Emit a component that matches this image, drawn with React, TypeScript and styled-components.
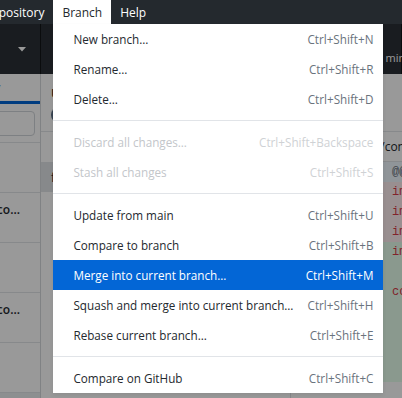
import React from "react";
import styled, { createGlobalStyle } from "styled-components";

const GlobalStyle = createGlobalStyle`
  html, body { margin: 0; padding: 0; }
  body {
    width: 402px;
    height: 398px;
    overflow: hidden;
    background: #ffffff;
    font-family: "Open Sans", "Noto Sans", sans-serif;
  }
  * { box-sizing: border-box; }
`;

const Window = styled.div`
  position: relative;
  width: 402px;
  height: 398px;
  overflow: hidden;
  display: flex;
  flex-direction: column;
  background: #ffffff;
  color: #24292e;
  font-size: 12px;
`;

/* ---------- menu bar ---------- */

const MenuBar = styled.nav`
  position: relative;
  z-index: 3;
  flex: none;
  height: 24px;
  display: flex;
  align-items: stretch;
  background: #24292e;
  margin-left: -145px;
`;

const MenuBarItem = styled.div<{ $open?: boolean }>`
  position: relative;
  display: flex;
  align-items: center;
  padding: 0 9px;
  font-size: 12px;
  white-space: nowrap;
  color: ${(p) => (p.$open ? "#24292e" : "#ffffff")};
  background: ${(p) => (p.$open ? "#ffffff" : "transparent")};
`;

const Dropdown = styled.ul`
  position: absolute;
  top: 100%;
  left: 0;
  width: 330px;
  margin: 0;
  padding: 0;
  list-style: none;
  background: #ffffff;
  color: #24292e;
  box-shadow: 0 2px 4px rgba(0, 0, 0, 0.08);
`;

const Item = styled.li<{ $active?: boolean; $disabled?: boolean }>`
  height: 30px;
  display: flex;
  align-items: center;
  justify-content: space-between;
  gap: 12px;
  padding: 0 10px 0 20px;
  font-size: 11.7px;
  white-space: nowrap;
  background: ${(p) => (p.$active ? "#0366d6" : "transparent")};
  color: ${(p) => (p.$active ? "#ffffff" : p.$disabled ? "#c3c6ca" : "#24292e")};
`;

const Shortcut = styled.span<{ $active?: boolean; $disabled?: boolean }>`
  color: ${(p) => (p.$active ? "#ffffff" : p.$disabled ? "#cfd2d5" : "#6a737d")};
`;

const Separator = styled.li`
  height: 1px;
  margin: 6px 0;
  background: #e1e4e8;
`;

/* ---------- app frame (dimmed) ---------- */

const Frame = styled.div`
  flex: 1;
  min-height: 0;
  width: 601px;
  margin-left: -199px;
  display: flex;
  flex-direction: column;
`;

const Toolbar = styled.div`
  flex: none;
  height: 50px;
  display: flex;
  background: #2a3036;
  color: #ffffff;
`;

const ToolbarButton = styled.div<{ $width?: number }>`
  ${(p) => (p.$width ? `width: ${p.$width}px; flex-shrink: 0;` : "flex: 1;")}
  display: flex;
  align-items: center;
  gap: 8px;
  padding: 0 14px 0 10px;
  border-right: 1px solid #111417;
  min-width: 0;
`;

const ToolbarText = styled.div`
  flex: 1;
  min-width: 0;
  display: flex;
  flex-direction: column;
  white-space: nowrap;
`;

const ToolbarTitle = styled.span`
  font-size: 11px;
  line-height: 16px;
  color: #d0d4d8;
`;

const ToolbarValue = styled.span`
  font-size: 11px;
  line-height: 15px;
  color: #ffffff;
`;

const ToolbarStrong = styled.span`
  font-size: 12px;
  font-weight: 600;
  line-height: 16px;
  color: #ffffff;
`;

const Body = styled.div`
  flex: 1;
  min-height: 0;
  display: flex;
  align-items: flex-start;
`;

const Sidebar = styled.aside`
  width: 240px;
  flex: none;
  align-self: stretch;
  display: flex;
  flex-direction: column;
  border-right: 1px solid #d6d9dc;
`;

const Tabs = styled.div`
  display: flex;
  height: 30px;
  flex: none;
`;

const Tab = styled.div<{ $selected?: boolean }>`
  flex: 1;
  display: flex;
  align-items: center;
  justify-content: center;
  font-size: 12px;
  color: #24292e;
  border-bottom: 3px solid ${(p) => (p.$selected ? "#0366d6" : "transparent")};
`;

const FilterRow = styled.div`
  height: 39px;
  flex: none;
  display: flex;
  align-items: flex-start;
  padding: 7px 5px 0 10px;
  border-bottom: 1px solid #e1e4e8;
`;

const FilterInput = styled.input`
  flex: 1;
  min-width: 0;
  height: 25px;
  margin: 0;
  border: 1px solid #d1d5da;
  border-radius: 4px;
  padding: 0 8px;
  font: inherit;
  font-size: 12px;
  background: #ffffff;
`;

const CommitList = styled.div`
  flex: none;
  display: flex;
  flex-direction: column;
`;

const CommitItem = styled.div<{ $selected?: boolean }>`
  height: 50px;
  flex: none;
  display: flex;
  flex-direction: column;
  justify-content: center;
  padding: 0 20px 0 10px;
  border-bottom: 1px solid #e1e4e8;
  background: ${(p) => (p.$selected ? "#ebeef1" : "#ffffff")};
`;

/* long titles are clipped on the left so their truncated tail stays at the right edge */
const CommitTitle = styled.div`
  direction: rtl;
  text-align: left;
  overflow: hidden;
  white-space: nowrap;
  font-size: 12px;
  font-weight: 600;
  line-height: 16px;
  color: #24292e;
`;

const TitleText = styled.span`
  display: inline-block;
  direction: ltr;
  unicode-bidi: isolate;
`;

const CommitMeta = styled.div`
  font-size: 11px;
  line-height: 16px;
  color: #6a737d;
  white-space: nowrap;
`;

const Main = styled.section`
  flex: 1;
  min-width: 0;
  align-self: stretch;
  display: flex;
  flex-direction: column;
`;

const CommitHeader = styled.div`
  height: 58px;
  flex: none;
  padding: 10px 10px 0 10px;
  border-bottom: 1px solid #e1e4e8;
  display: flex;
  flex-direction: column;
  gap: 5px;
`;

const HeaderTitle = styled.div`
  font-size: 13px;
  font-weight: 600;
  line-height: 18px;
  white-space: nowrap;
`;

const AuthorRow = styled.div`
  display: flex;
  align-items: center;
  gap: 6px;
  font-size: 11px;
  color: #586069;
`;

const Avatar = styled.span`
  width: 16px;
  height: 16px;
  border-radius: 50%;
  background: #5b6f86;
  flex-shrink: 0;
`;

const Split = styled.div`
  flex: 1;
  min-height: 0;
  display: flex;
`;

const FileList = styled.div`
  width: 250px;
  flex: none;
  border-right: 1px solid #e1e4e8;
  display: flex;
  flex-direction: column;
`;

const FileListHeader = styled.div`
  height: 30px;
  flex: none;
  display: flex;
  align-items: center;
  justify-content: center;
  font-size: 11px;
  color: #586069;
`;

const FileRow = styled.div<{ $selected?: boolean }>`
  height: 30px;
  flex: none;
  display: flex;
  align-items: center;
  padding: 0 10px;
  font-size: 12px;
  background: ${(p) => (p.$selected ? "#e1e4e8" : "transparent")};
  white-space: nowrap;
`;

const Diff = styled.div`
  flex: 1;
  min-width: 0;
  display: flex;
  flex-direction: column;
`;

const DiffHeader = styled.div`
  height: 30px;
  flex: none;
  display: flex;
  align-items: center;
  padding-left: 40px;
  font-size: 12px;
  white-space: nowrap;
  border-bottom: 1px solid #e1e4e8;
`;

type LineKind = "hunk" | "del" | "add" | "ctx";

const lineBg: Record<LineKind, string> = {
  hunk: "#f1f8ff",
  del: "#ffeef0",
  add: "#e6ffed",
  ctx: "#ffffff",
};

const DiffLine = styled.div<{ $kind: LineKind }>`
  height: 20px;
  flex: none;
  display: flex;
  align-items: center;
  background: ${(p) => lineBg[p.$kind]};
  font-family: "Liberation Mono", "DejaVu Sans Mono", monospace;
  font-size: 12px;
  white-space: pre;
`;

const Gutter = styled.span`
  width: 45px;
  flex-shrink: 0;
  text-align: right;
  padding-right: 6px;
  color: #959da5;
`;

const Code = styled.span<{ $kind: LineKind }>`
  padding-left: 11px;
  color: ${(p) => (p.$kind === "hunk" ? "#6a737d" : "#d73a49")};
`;

const Dim = styled.div`
  position: absolute;
  top: 24px;
  left: 0;
  right: 0;
  bottom: 0;
  z-index: 2;
  background: rgba(0, 0, 0, 0.4);
`;

/* ---------- icons ---------- */

const Caret = () => (
  <svg width="8" height="5" viewBox="0 0 8 5">
    <path d="M0 0h8L4 4.5z" fill="#ffffff" />
  </svg>
);

const BranchIcon = () => (
  <svg width="16" height="16" viewBox="0 0 16 16" fill="#ffffff">
    <path d="M5 3.25a.75.75 0 1 1-1.5 0 .75.75 0 0 1 1.5 0Zm0 2.122a2.25 2.25 0 1 0-1.5 0v5.256a2.251 2.251 0 1 0 1.5 0V5.372ZM4.25 12a.75.75 0 1 0 0 1.5.75.75 0 0 0 0-1.5ZM11.5 3.25a.75.75 0 1 1 1.5 0 .75.75 0 0 1-1.5 0Zm.75-2.250a2.25 2.25 0 0 0-.75 4.372V6.5a.75.75 0 0 1-.75.75H6.5v1.5h4.25a2.25 2.25 0 0 0 2.250-2.25V5.372A2.25 2.25 0 0 0 12.25 1Z" />
  </svg>
);

const SyncIcon = () => (
  <svg width="16" height="16" viewBox="0 0 16 16" fill="#ffffff">
    <path d="M8 2.5a5.487 5.487 0 0 0-4.131 1.869l1.204 1.204A.25.25 0 0 1 4.896 6H1.25A.25.25 0 0 1 1 5.75V2.104a.25.25 0 0 1 .427-.177l1.38 1.38A7.001 7.001 0 0 1 14.95 7.16a.75.75 0 0 1-1.49.178A5.501 5.501 0 0 0 8 2.5ZM1.705 8.005a.75.75 0 0 1 .834.656 5.501 5.501 0 0 0 9.592 2.97l-1.204-1.204a.25.25 0 0 1 .177-.427h3.646a.25.25 0 0 1 .25.25v3.646a.25.25 0 0 1-.427.177l-1.38-1.38A7.001 7.001 0 0 1 1.05 8.84a.75.75 0 0 1 .656-.834Z" />
  </svg>
);

/* ---------- data ---------- */

type MenuEntry =
  | { sep: true }
  | { label: string; key: string; disabled?: boolean; active?: boolean };

const branchMenu: MenuEntry[] = [
  { label: "New branch…", key: "Ctrl+Shift+N" },
  { label: "Rename…", key: "Ctrl+Shift+R" },
  { label: "Delete…", key: "Ctrl+Shift+D" },
  { sep: true },
  { label: "Discard all changes…", key: "Ctrl+Shift+Backspace", disabled: true },
  { label: "Stash all changes", key: "Ctrl+Shift+S", disabled: true },
  { sep: true },
  { label: "Update from main", key: "Ctrl+Shift+U" },
  { label: "Compare to branch", key: "Ctrl+Shift+B" },
  { label: "Merge into current branch…", key: "Ctrl+Shift+M", active: true },
  { label: "Squash and merge into current branch…", key: "Ctrl+Shift+H" },
  { label: "Rebase current branch…", key: "Ctrl+Shift+E" },
  { sep: true },
  { label: "Compare on GitHub", key: "Ctrl+Shift+C" },
];

const commits = [
  { title: "Fix typo in readme", meta: "octocat • 2 hours ago" },
  { title: "Move renderer setup into the bootstrap co...", meta: "octocat • 3 hours ago" },
  { title: "Bump dependencies", meta: "octocat • 1 day ago" },
  { title: "Extract shared settings into a separate co...", meta: "octocat • 2 days ago" },
  { title: "Add tests", meta: "octocat • 3 days ago" },
  { title: "Initial commit", meta: "octocat • 4 days ago", selected: true },
];

const diffLines: { kind: LineKind; old: string; cur: string; text: string }[] = [
  { kind: "hunk", old: "", cur: "", text: "@@ -1,5 +1,6 @@" },
  { kind: "del", old: "1", cur: "", text: "import React from 'react'" },
  { kind: "del", old: "2", cur: "", text: "import { render } from 'react-dom'" },
  { kind: "del", old: "3", cur: "", text: "import App from './App'" },
  { kind: "add", old: "", cur: "1", text: "import { createRoot } from 'react-dom/client'" },
  { kind: "add", old: "", cur: "2", text: "" },
  { kind: "add", old: "", cur: "3", text: "const root = createRoot(container)" },
  { kind: "add", old: "", cur: "4", text: "  root.render(<App />)" },
  { kind: "add", old: "", cur: "5", text: "  // mounted" },
  { kind: "add", old: "", cur: "6", text: "" },
  { kind: "add", old: "", cur: "7", text: "" },
];

export default function App() {
  return (
    <>
      <GlobalStyle />
      <Window>
        <MenuBar>
          <MenuBarItem>File</MenuBarItem>
          <MenuBarItem>Edit</MenuBarItem>
          <MenuBarItem>View</MenuBarItem>
          <MenuBarItem>Repository</MenuBarItem>
          <MenuBarItem $open>
            Branch
            <Dropdown>
              {branchMenu.map((m, i) =>
                "sep" in m ? (
                  <Separator key={i} />
                ) : (
                  <Item key={i} $active={m.active} $disabled={m.disabled}>
                    <span>{m.label}</span>
                    <Shortcut $active={m.active} $disabled={m.disabled}>
                      {m.key}
                    </Shortcut>
                  </Item>
                )
              )}
            </Dropdown>
          </MenuBarItem>
          <MenuBarItem>Help</MenuBarItem>
        </MenuBar>

        <Frame>
          <Toolbar>
            <ToolbarButton $width={240}>
              <ToolbarText>
                <ToolbarTitle>Current repository</ToolbarTitle>
                <ToolbarStrong>desktop</ToolbarStrong>
              </ToolbarText>
              <Caret />
            </ToolbarButton>
            <ToolbarButton $width={236}>
              <BranchIcon />
              <ToolbarText>
                <ToolbarTitle>Current branch</ToolbarTitle>
                <ToolbarStrong>feature</ToolbarStrong>
              </ToolbarText>
              <Caret />
            </ToolbarButton>
            <ToolbarButton>
              <SyncIcon />
              <ToolbarText>
                <ToolbarStrong>Fetch origin</ToolbarStrong>
                <ToolbarValue>Last fetched 5 minutes ago</ToolbarValue>
              </ToolbarText>
            </ToolbarButton>
          </Toolbar>

          <Body>
            <Sidebar>
              <Tabs>
                <Tab>Changes</Tab>
                <Tab $selected>History</Tab>
              </Tabs>
              <FilterRow>
                <FilterInput readOnly />
              </FilterRow>
              <CommitList>
                {commits.map((c, i) => (
                  <CommitItem key={i} $selected={c.selected}>
                    <CommitTitle>
                      <TitleText>{c.title}</TitleText>
                    </CommitTitle>
                    <CommitMeta>{c.meta}</CommitMeta>
                  </CommitItem>
                ))}
              </CommitList>
            </Sidebar>

            <Main>
              <CommitHeader>
                <HeaderTitle>Update frontend config</HeaderTitle>
                <AuthorRow>
                  <Avatar />
                  <span>octocat</span>
                </AuthorRow>
              </CommitHeader>
              <Split>
                <FileList>
                  <FileListHeader>1 changed file</FileListHeader>
                  <FileRow $selected>frontend/config/index.tsx</FileRow>
                </FileList>
                <Diff>
                  <DiffHeader>frontend/config/index.tsx</DiffHeader>
                  {diffLines.map((l, i) => (
                    <DiffLine key={i} $kind={l.kind}>
                      <Gutter>{l.old}</Gutter>
                      <Gutter>{l.cur}</Gutter>
                      <Code $kind={l.kind}>{l.text}</Code>
                    </DiffLine>
                  ))}
                </Diff>
              </Split>
            </Main>
          </Body>
        </Frame>

        <Dim />
      </Window>
    </>
  );
}
